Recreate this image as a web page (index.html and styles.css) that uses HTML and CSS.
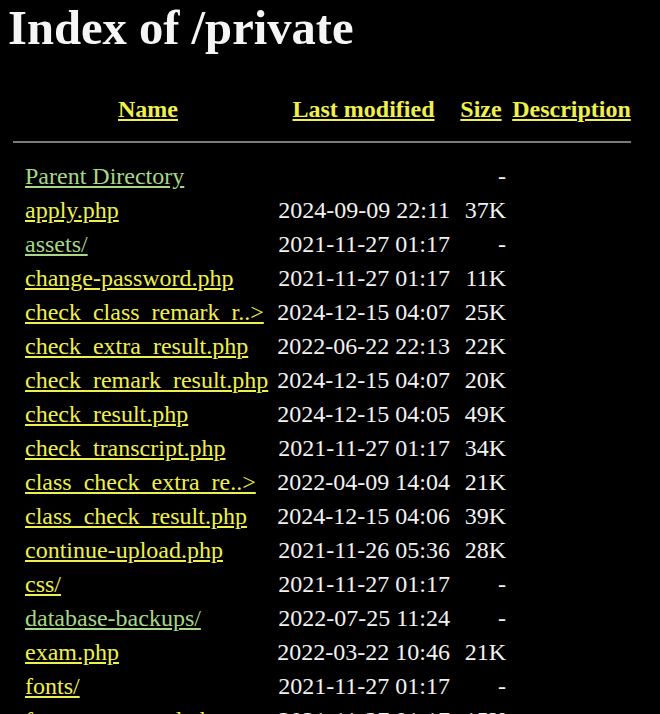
FILE: index.html
```html
<!DOCTYPE html>
<html>
<head>
<meta charset="utf-8">
<title>Index of /private</title>
<link rel="stylesheet" href="styles.css">
</head>
<body>
<h1 class="title">Index of /private</h1>
<table class="listing">
<tr class="head">
<th class="c-icon"></th>
<th class="c-name"><a href="#">Name</a></th>
<th class="c-date"><a href="#">Last modified</a></th>
<th class="c-size"><a href="#">Size</a></th>
<th class="c-desc"><a href="#">Description</a></th>
</tr>
<tr class="rule"><th colspan="5"><hr class="sep"></th></tr>
<tr><td class="c-icon"></td><td class="c-name"><a class="visited" href="#">Parent Directory</a></td><td class="c-date">&nbsp;</td><td class="c-size">-</td><td class="c-desc">&nbsp;</td></tr>
<tr><td class="c-icon"></td><td class="c-name"><a href="#">apply.php</a></td><td class="c-date">2024-09-09 22:11</td><td class="c-size">37K</td><td class="c-desc">&nbsp;</td></tr>
<tr><td class="c-icon"></td><td class="c-name"><a class="visited" href="#">assets/</a></td><td class="c-date">2021-11-27 01:17</td><td class="c-size">-</td><td class="c-desc">&nbsp;</td></tr>
<tr><td class="c-icon"></td><td class="c-name"><a href="#">change-password.php</a></td><td class="c-date">2021-11-27 01:17</td><td class="c-size">11K</td><td class="c-desc">&nbsp;</td></tr>
<tr><td class="c-icon"></td><td class="c-name"><a href="#">check_class_remark_r..&gt;</a></td><td class="c-date">2024-12-15 04:07</td><td class="c-size">25K</td><td class="c-desc">&nbsp;</td></tr>
<tr><td class="c-icon"></td><td class="c-name"><a href="#">check_extra_result.php</a></td><td class="c-date">2022-06-22 22:13</td><td class="c-size">22K</td><td class="c-desc">&nbsp;</td></tr>
<tr><td class="c-icon"></td><td class="c-name"><a href="#">check_remark_result.php</a></td><td class="c-date">2024-12-15 04:07</td><td class="c-size">20K</td><td class="c-desc">&nbsp;</td></tr>
<tr><td class="c-icon"></td><td class="c-name"><a href="#">check_result.php</a></td><td class="c-date">2024-12-15 04:05</td><td class="c-size">49K</td><td class="c-desc">&nbsp;</td></tr>
<tr><td class="c-icon"></td><td class="c-name"><a href="#">check_transcript.php</a></td><td class="c-date">2021-11-27 01:17</td><td class="c-size">34K</td><td class="c-desc">&nbsp;</td></tr>
<tr><td class="c-icon"></td><td class="c-name"><a href="#">class_check_extra_re..&gt;</a></td><td class="c-date">2022-04-09 14:04</td><td class="c-size">21K</td><td class="c-desc">&nbsp;</td></tr>
<tr><td class="c-icon"></td><td class="c-name"><a href="#">class_check_result.php</a></td><td class="c-date">2024-12-15 04:06</td><td class="c-size">39K</td><td class="c-desc">&nbsp;</td></tr>
<tr><td class="c-icon"></td><td class="c-name"><a href="#">continue-upload.php</a></td><td class="c-date">2021-11-26 05:36</td><td class="c-size">28K</td><td class="c-desc">&nbsp;</td></tr>
<tr><td class="c-icon"></td><td class="c-name"><a href="#">css/</a></td><td class="c-date">2021-11-27 01:17</td><td class="c-size">-</td><td class="c-desc">&nbsp;</td></tr>
<tr><td class="c-icon"></td><td class="c-name"><a class="visited" href="#">database-backups/</a></td><td class="c-date">2022-07-25 11:24</td><td class="c-size">-</td><td class="c-desc">&nbsp;</td></tr>
<tr><td class="c-icon"></td><td class="c-name"><a href="#">exam.php</a></td><td class="c-date">2022-03-22 10:46</td><td class="c-size">21K</td><td class="c-desc">&nbsp;</td></tr>
<tr><td class="c-icon"></td><td class="c-name"><a href="#">fonts/</a></td><td class="c-date">2021-11-27 01:17</td><td class="c-size">-</td><td class="c-desc">&nbsp;</td></tr>
<tr><td class="c-icon"></td><td class="c-name"><a href="#">forgot-password.php</a></td><td class="c-date">2021-11-27 01:17</td><td class="c-size">15K</td><td class="c-desc">&nbsp;</td></tr>
</table>
</body>
</html>
```

FILE: styles.css
```css
html, body {
  background: #000;
}
body {
  margin: 0;
  padding: 0 0 0 8px;
  color: #f2f2f2;
  font-family: "Liberation Serif", "Times New Roman", serif;
}
.title {
  font-size: 48.6px;
  font-weight: bold;
  line-height: 53px;
  margin: 2px 0 37px 0;
  color: #f5f5f5;
}
.listing {
  border-collapse: separate;
  border-spacing: 0;
  margin-left: 2px;
  font-size: 24px;
  line-height: 28px;
}
.listing th,
.listing td {
  padding: 3px 3px;
  vertical-align: top;
  white-space: nowrap;
}
.listing th {
  font-weight: bold;
  text-align: center;
}
.listing a {
  color: #f0f04c;
  text-decoration: underline;
}
.listing a.visited {
  color: #a6d888;
}
.c-icon { width: 6px; }
.c-name { width: 246px; text-align: left; }
.c-date { width: 173px; text-align: right; }
.c-size { width: 50px; text-align: right; }
.c-desc { width: 119px; }
.rule th {
  padding: 3px 3px;
}
.sep {
  margin: 12px 0 13px 0;
  border: 0;
  height: 2px;
  background: #7a7a7a;
}
```
